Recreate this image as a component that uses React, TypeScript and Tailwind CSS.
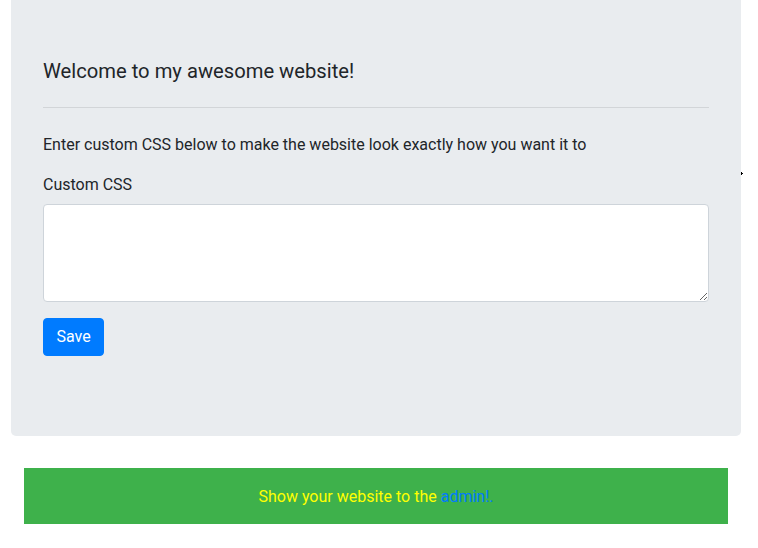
export default function App() {
  return (
    <div className="relative min-h-screen bg-white font-['Roboto',sans-serif] text-[#212529]">
      <div className="ml-[11px] w-[730px] rounded-b-[5px] bg-[#e9ecef] px-8 pt-[59px] pb-[80px]">
        <h5 className="text-[20.2px] leading-[24px] font-normal">Welcome to my awesome website!</h5>
        <hr className="mt-[24px] mb-[25px] border-t border-[#d2d5d8]" />
        <p className="text-base leading-6 mb-4">
          Enter custom CSS below to make the website look exactly how you want it to
        </p>
        <form className="flex flex-col">
          <label className="text-base leading-6 mb-[7px]">Custom CSS</label>
          <textarea className="h-[98px] w-full rounded border border-[#ced4da] bg-white px-3 py-1.5 outline-none" />
          <div className="mt-4">
            <button
              type="button"
              className="h-[38px] w-[61px] rounded border border-[#007bff] bg-[#007bff] text-base leading-6 text-white"
            >
              Save
            </button>
          </div>
        </form>
      </div>

      <div className="mt-[32px] ml-6 w-[704px] bg-[#3eb14b] pt-[17px] pb-[15px] text-center text-base leading-6 text-[#ffff00]">
        Show your website to the <a className="text-[#007bff]">admin!.</a>
      </div>

      <svg className="absolute left-[741px] top-[172px]" width="3" height="4" viewBox="0 0 3 4">
        <rect x="0" y="0" width="1" height="3" fill="#000" />
        <rect x="1" y="1" width="1" height="1" fill="#000" />
      </svg>
    </div>
  )
}
